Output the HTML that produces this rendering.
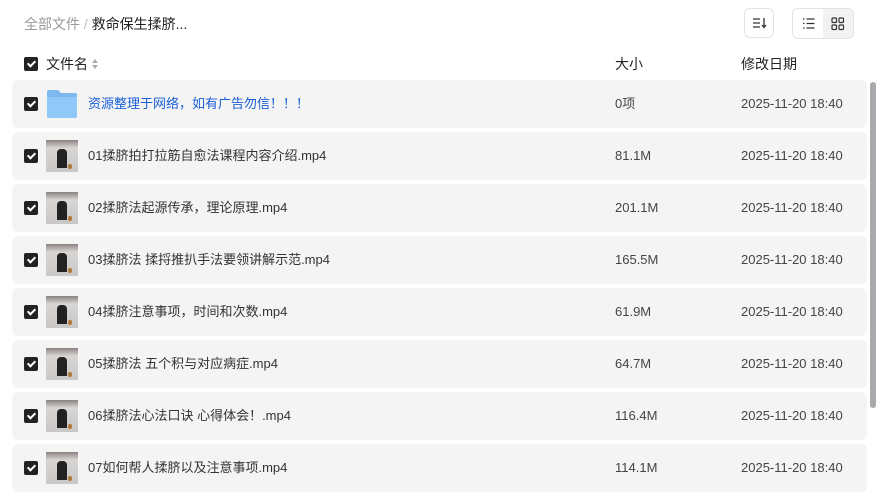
<!DOCTYPE html>
<html><head><meta charset="utf-8"><style>
body{margin:0;width:878px;height:495px;overflow:hidden;background:#fff;font-family:"Liberation Sans","Noto Sans CJK SC",sans-serif;color:#333;position:relative}
.a{position:absolute}
.cb{position:absolute;left:24px;width:14px;height:14px;background:#222;border-radius:2px}
.cb:after{content:"";position:absolute;left:4.5px;top:2px;width:3px;height:6px;border:solid #fff;border-width:0 2px 2px 0;transform:rotate(45deg)}
.row{position:absolute;left:12px;width:855px;height:48px;background:#f4f4f5;border-radius:6px}
.row .cb{top:17px;left:12px}
.nm,.sz,.dt{position:absolute;top:0;height:48px;line-height:48px;font-size:13px;white-space:nowrap}
.nm{left:76px;color:#333}
.sz{left:603px;color:#444}
.dt{left:729px;color:#444}
.th{position:absolute;left:34px;top:8px;width:32px;height:32px;background:linear-gradient(#8a8280 0,#d8d6d4 25%,#c9c7c6 100%)}
.th:before{content:"";position:absolute;left:11px;top:9px;width:10px;height:19px;background:#222;border-radius:4px 4px 0 0}
.th:after{content:"";position:absolute;left:22px;top:24px;width:4px;height:5px;background:#b07a3a;border-radius:2px}
.hd{position:absolute;top:53px;height:22px;line-height:22px;font-size:14px;color:#222}
</style></head><body>
<div class="a" style="left:24px;top:13px;height:22px;line-height:22px;font-size:14px;color:#999">全部文件 <span style="color:#bbb">/</span> <span style="color:#222">救命保生揉脐...</span></div>
<div class="a" style="left:744px;top:8px;width:30px;height:30px;border:1px solid #e3e3e3;border-radius:6px;box-sizing:border-box">
<svg width="28" height="28" viewBox="0 0 28 28" style="position:absolute;left:0;top:0"><path d="M8 10h7M8 14h7M8 18h7M19 9v9M17 16l2 2.5 2-2.5" stroke="#333" stroke-width="1.3" fill="none"/></svg></div>
<div class="a" style="left:792px;top:8px;width:62px;height:31px;border:1px solid #e3e3e3;border-radius:6px;box-sizing:border-box;background:#fff;overflow:hidden">
<div class="a" style="left:30px;top:0;width:31px;height:31px;background:#f2f2f3"></div>
<svg width="62" height="30" viewBox="0 0 62 30" style="position:absolute;left:0;top:0"><path d="M10 10h1.5M10 14.5h1.5M10 19h1.5M13.5 10h8M13.5 14.5h8M13.5 19h8" stroke="#333" stroke-width="1.3"/><g fill="none" stroke="#333" stroke-width="1.2"><rect x="39" y="9" width="4.5" height="4.5" rx="1"/><rect x="46" y="9" width="4.5" height="4.5" rx="1"/><rect x="39" y="16" width="4.5" height="4.5" rx="1"/><rect x="46" y="16" width="4.5" height="4.5" rx="1"/></g></svg></div>
<div class="cb" style="top:57px"></div>
<div class="hd" style="left:46px">文件名 <svg width="6" height="10" viewBox="0 0 6 10"><path d="M0 4l3-4 3 4zM0 6l3 4 3-4z" fill="#aaa"/></svg></div>
<div class="hd" style="left:615px">大小</div>
<div class="hd" style="left:741px">修改日期</div>

<div class="row" style="top:80px"><div class="cb"></div>
<svg class="a" style="left:34px;top:9px" width="32" height="30" viewBox="0 0 32 30"><path d="M1 3a2 2 0 0 1 2-2h9l3 3h14a2 2 0 0 1 2 2v21a2 2 0 0 1-2 2H3a2 2 0 0 1-2-2z" fill="#7db9f0"/><path d="M1 8h30v19a2 2 0 0 1-2 2H3a2 2 0 0 1-2-2z" fill="#92c8f7"/></svg>
<div class="nm" style="color:#1a5fd6">资源整理于网络，如有广告勿信！！！</div><div class="sz">0项</div><div class="dt">2025-11-20 18:40</div></div>
<div class="row" style="top:132px"><div class="cb"></div><div class="th"></div><div class="nm">01揉脐拍打拉筋自愈法课程内容介绍.mp4</div><div class="sz">81.1M</div><div class="dt">2025-11-20 18:40</div></div>
<div class="row" style="top:184px"><div class="cb"></div><div class="th"></div><div class="nm">02揉脐法起源传承，理论原理.mp4</div><div class="sz">201.1M</div><div class="dt">2025-11-20 18:40</div></div>
<div class="row" style="top:236px"><div class="cb"></div><div class="th"></div><div class="nm">03揉脐法 揉捋推扒手法要领讲解示范.mp4</div><div class="sz">165.5M</div><div class="dt">2025-11-20 18:40</div></div>
<div class="row" style="top:288px"><div class="cb"></div><div class="th"></div><div class="nm">04揉脐注意事项，时间和次数.mp4</div><div class="sz">61.9M</div><div class="dt">2025-11-20 18:40</div></div>
<div class="row" style="top:340px"><div class="cb"></div><div class="th"></div><div class="nm">05揉脐法 五个积与对应病症.mp4</div><div class="sz">64.7M</div><div class="dt">2025-11-20 18:40</div></div>
<div class="row" style="top:392px"><div class="cb"></div><div class="th"></div><div class="nm">06揉脐法心法口诀 心得体会！.mp4</div><div class="sz">116.4M</div><div class="dt">2025-11-20 18:40</div></div>
<div class="row" style="top:444px"><div class="cb"></div><div class="th"></div><div class="nm">07如何帮人揉脐以及注意事项.mp4</div><div class="sz">114.1M</div><div class="dt">2025-11-20 18:40</div></div>
<div class="a" style="left:870px;top:82px;width:6px;height:326px;background:#a8a8ad;border-radius:3px"></div>
</body></html>
